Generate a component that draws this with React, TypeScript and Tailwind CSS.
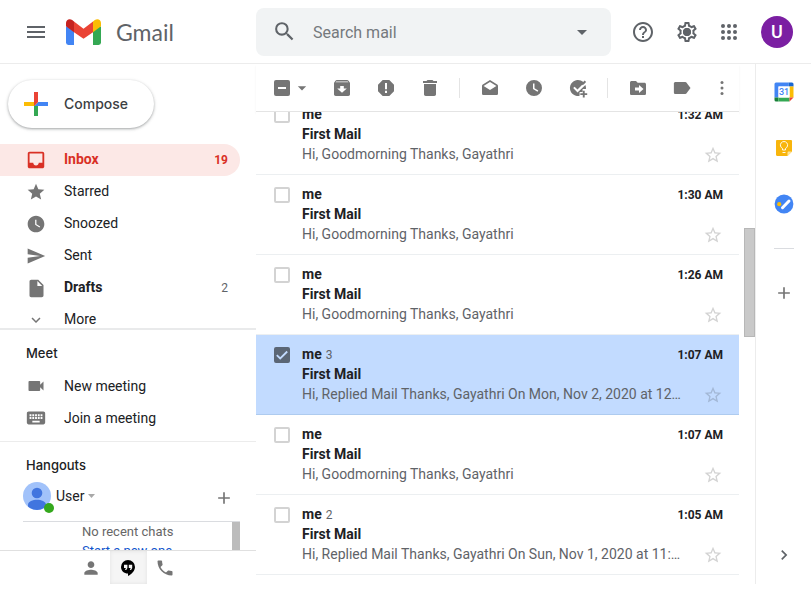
import type { ReactNode } from "react";
import {
  MdAdd,
  MdChevronRight,
  MdExpandMore,
  MdHelpOutline,
  MdInbox,
  MdInsertDriveFile,
  MdKeyboard,
  MdMenu,
  MdPerson,
  MdPhone,
  MdSearch,
  MdSend,
  MdOutlineSettings,
  MdStar,
  MdStarBorder,
  MdVideocam,
  MdWatchLater,
  MdArrowDropDown,
} from "react-icons/md";

type Mail = { time: string; count?: number; snippet: string; checked?: boolean };

const mails: Mail[] = [
  { time: "1:32 AM", snippet: "Hi, Goodmorning Thanks, Gayathri" },
  { time: "1:30 AM", snippet: "Hi, Goodmorning Thanks, Gayathri" },
  { time: "1:26 AM", snippet: "Hi, Goodmorning Thanks, Gayathri" },
  {
    time: "1:07 AM",
    count: 3,
    snippet: "Hi, Replied Mail Thanks, Gayathri On Mon, Nov 2, 2020 at 12…",
    checked: true,
  },
  { time: "1:07 AM", snippet: "Hi, Goodmorning Thanks, Gayathri" },
  {
    time: "1:05 AM",
    count: 2,
    snippet: "Hi, Replied Mail Thanks, Gayathri On Sun, Nov 1, 2020 at 11:…",
  },
];

const folders = [
  { name: "Inbox", icon: <MdInbox size={22} />, count: 19, active: true },
  { name: "Starred", icon: <MdStar size={20} /> },
  { name: "Snoozed", icon: <MdWatchLater size={20} /> },
  { name: "Sent", icon: <MdSend size={20} /> },
  { name: "Drafts", icon: <MdInsertDriveFile size={21} />, count: 2, bold: true },
  { name: "More", icon: <MdExpandMore size={18} /> },
];

function GmailLogo() {
  return (
    <svg viewBox="0 0 35 26" className="h-[26px] w-[35px]" aria-hidden="true">
      <path fill="#4285f4" d="M0 7.5h8V26H2.4A2.4 2.4 0 0 1 0 23.6z" />
      <path fill="#34a853" d="M27 7.5h8v16.1a2.4 2.4 0 0 1-2.4 2.4H27z" />
      <path fill="#ea4335" d="M8 13.2V2.6l9.5 7.1L27 2.6v10.6l-9.5 6.6z" />
      <path fill="#fbbc04" d="M27 2.6l1.8-1.5C31.4-.9 35 .6 35 4v3.200l-8 6z" />
      <path fill="#c5221f" d="M0 4C0 .6 3.600-.9 6.200 1.100L8 2.600v10.600l-8-6z" />
    </svg>
  );
}

function Glyph({ children }: { children: ReactNode }) {
  return (
    <svg viewBox="0 0 20 20" className="size-5" fill="currentColor" fillRule="evenodd" aria-hidden="true">
      {children}
    </svg>
  );
}

const tools = {
  archive: (
    <path d="M3.700 2.600 2.400 4.200C2.100 4.500 2 4.900 2 5.300v11C2 17.200 2.800 18 3.700 18h12.600c.9 0 1.700-.8 1.700-1.700v-11c0-.4-.1-.8-.4-1.100l-1.300-1.600C16 2.200 15.600 2 15.200 2H4.800c-.4 0-.8.2-1.100.6zM4.200 3.400h11.600l.7.900h-13zM10 14.800 5.200 10.400h3V8h3.600v2.400h3z" />
  ),
  spam: (
    <path d="M6.700 2h6.600L18 6.700v6.600L13.300 18H6.700L2 13.300V6.700zM9 5v6.200h2V5zm0 7.800v2.200h2v-2.200z" />
  ),
  remove: <path d="M7.500 2h5l1 1H17v2H3V3h3.500zM4 6h12v10.300c0 .9-.8 1.700-1.700 1.700H5.700c-.9 0-1.700-.8-1.700-1.700z" />,
  read: (
    <path d="M18 8c0-.6-.3-1.100-.8-1.400L10 2 2.800 6.600C2.300 6.900 2 7.400 2 8v7.400C2 16.300 2.700 17 3.600 17h12.800c.9 0 1.600-.7 1.600-1.600zM10 12 3.600 7.900 10 3.900l6.400 4z" />
  ),
  snooze: <path d="M10 2a8 8 0 1 0 0 16 8 8 0 0 0 0-16zM9 5.500h1.500v4.700l3.800 2.200-.8 1.300L9 11.100z" />,
  task: (
    <>
      <path d="M12.800 2.500a8 8 0 1 0-1.200 15.300V14h3V11h3.300a8 8 0 0 0-.5-4.100L9.500 14.400 5.200 10.100l1.400-1.400 2.900 2.900 5.700-5.800 1.500-.1A8 8 0 0 0 12.800 2.500z" />
      <path d="m16.700 2.500 1.400 1.400-3.300 3.300-1.400-1.400zM14.800 12.800h1.900v2.400h2.500v1.900h-2.500v2.500h-1.900v-2.500h-2.500v-1.900h2.500z" />
    </>
  ),
  move: (
    <path d="M3.600 3H8l1.700 1.800h6.700c.9 0 1.600.7 1.600 1.600v9c0 .9-.7 1.600-1.600 1.600H3.600C2.700 17 2 16.300 2 15.400V4.600C2 3.700 2.700 3 3.600 3zM11 7v2.600H7v2.800h4V15l4.500-4z" />
  ),
  label: <path d="M3.500 4h9.800c.5 0 1 .3 1.300.7L18.500 10l-3.900 5.300c-.3.400-.8.700-1.300.7H3.500c-.9 0-1.600-.7-1.600-1.600V5.600C1.900 4.700 2.600 4 3.500 4z" />,
};

function Tool({ label, children }: { label: string; children: ReactNode }) {
  return (
    <button type="button" aria-label={label} className="flex h-10 w-11 items-center justify-center">
      <Glyph>{children}</Glyph>
    </button>
  );
}

function Header() {
  return (
    <header className="flex h-16 items-center border-b border-[#ececec] text-[#5f6368]">
      <div className="flex w-64 shrink-0 items-center pl-6">
        <button type="button" aria-label="Main menu">
          <MdMenu size={24} />
        </button>
        <a href="#inbox" className="ml-[18px] flex items-center gap-[15px]">
          <GmailLogo />
          <span className="font-['Lato',sans-serif] text-[23px] leading-8">Gmail</span>
        </a>
      </div>
      <form className="flex h-12 flex-1 items-center rounded-lg bg-[#f1f3f4] pl-4">
        <button type="button" aria-label="Search">
          <MdSearch size={25} />
        </button>
        <input
          aria-label="Search mail"
          placeholder="Search mail"
          className="ml-4 h-[26px] min-w-0 flex-1 bg-transparent pt-[2px] text-base outline-none placeholder:text-[#75797d]"
        />
        <button type="button" aria-label="Show search options" className="mr-[17px]">
          <MdArrowDropDown size={24} />
        </button>
      </form>
      <div className="flex w-[200px] shrink-0 items-center gap-1 pl-3">
        <button type="button" aria-label="Support" className="flex size-10 items-center justify-center">
          <MdHelpOutline size={24} />
        </button>
        <button type="button" aria-label="Settings" className="grid size-10 place-items-center">
          <MdOutlineSettings size={24} className="[grid-area:1/1]" />
          <span className="size-2 rounded-full bg-[#5f6368] [grid-area:1/1]" />
        </button>
        <button type="button" aria-label="Google apps" className="flex h-10 w-9 items-center justify-center">
          <svg viewBox="0 0 24 24" className="size-6" fill="currentColor" aria-hidden="true">
            {[6, 12, 18].map((y) => [6, 12, 18].map((x) => <circle key={`${x}-${y}`} cx={x} cy={y} r="2" />))}
          </svg>
        </button>
        <button
          type="button"
          aria-label="Account"
          className="ml-[10px] size-8 rounded-full bg-[#7b1fa2] text-[18px] font-medium text-white"
        >
          U
        </button>
      </div>
    </header>
  );
}

function Sidebar() {
  return (
    <aside className="w-64 shrink-0 text-sm text-[#202124]">
      <div className="flex h-20 items-center pl-2">
        <button
          type="button"
          className="flex h-12 w-[146px] items-center gap-3 rounded-full bg-white pl-3 font-['Inter',sans-serif] text-sm font-medium text-[#3c4043] shadow-[0_1px_2px_rgba(60,64,67,0.3),0_1px_3px_1px_rgba(60,64,67,0.15)]"
        >
          <svg viewBox="0 0 32 32" className="size-8" aria-hidden="true">
            <path fill="#34a853" d="M14 16v12h4V18z" />
            <path fill="#4285f4" d="M28 14H18l-4 4h14z" />
            <path fill="#fbbc05" d="M4 14v4h10l4-4z" />
            <path fill="#ea4335" d="M14 4v14l4-4V4z" />
          </svg>
          Compose
        </button>
      </div>
      <nav className="h-[186px] overflow-hidden border-b-2 border-[#e9eaeb]">
        {folders.map((f) => (
          <a
            key={f.name}
            href={`#${f.name.toLowerCase()}`}
            className={`mr-4 flex h-8 items-center rounded-r-full pr-3 pl-6 ${
              f.active ? "bg-[#fce8e6] font-bold text-[#d93025]" : f.bold ? "font-bold" : ""
            }`}
          >
            <span className={`flex w-6 justify-center ${f.active ? "text-[#d93025]" : "text-[#757575]"}`}>
              {f.icon}
            </span>
            <span className="ml-4 flex-1 pb-[2px]">{f.name}</span>
            <span className={f.active ? "text-xs" : "text-xs font-normal text-[#5f6368]"}>{f.count}</span>
          </a>
        ))}
      </nav>
      <section className="h-28 border-b border-[#ececec] pt-[7px]">
        <h2 className="mb-px h-8 pl-[26px] font-['Inter',sans-serif] text-[13px] leading-8 font-medium">Meet</h2>
        <a href="#new-meeting" className="flex h-8 items-center gap-4 pl-6">
          <span className="flex w-6 justify-center text-[#757575]">
            <MdVideocam size={20} />
          </span>
          New meeting
        </a>
        <a href="#join-meeting" className="flex h-8 items-center gap-4 pl-6">
          <span className="flex w-6 justify-center text-[#757575]">
            <MdKeyboard size={22} />
          </span>
          Join a meeting
        </a>
      </section>
      <section className="pt-[7px]">
        <h2 className="mb-px h-8 pl-[26px] font-['Inter',sans-serif] text-[13px] leading-8 font-medium">Hangouts</h2>
        <div className="mr-4 ml-[23px] border-b border-[#dadce0]">
          <div className="flex h-[39px] items-start">
            <span className="relative">
              <svg viewBox="0 0 28 28" className="size-7" aria-hidden="true">
                <circle cx="14" cy="14" r="14" fill="#a1c2fa" />
                <circle cx="14" cy="11" r="5.300" fill="#4175df" />
                <path fill="#4175df" d="M5 24.600v-2.200c0-3 5-4.700 9-4.700s9 1.700 9 4.700v2.200a14 14 0 0 1-18 0z" />
              </svg>
              <span className="absolute -right-[3px] -bottom-[3px] size-[10px] rounded-full bg-[#34a81d]" />
            </span>
            <button type="button" className="ml-[5px] flex h-7 items-center gap-1">
              User
              <svg viewBox="0 0 7 4" className="h-1 w-[7px]" fill="#a8a8a8" aria-hidden="true">
                <path d="M0 0h7L3.500 4z" />
              </svg>
            </button>
            <button type="button" aria-label="New conversation" className="mr-[6px] ml-auto flex h-8 items-center text-[#757575]">
              <MdAdd size={20} />
            </button>
          </div>
        </div>
        <div className="mr-4 flex h-7 justify-between overflow-hidden pl-[82px] text-[13px] leading-[19px]">
          <div>
            <p className="text-[#666]">No recent chats</p>
            <a href="#new-chat" className="text-[#15c]">
              Start a new one
            </a>
          </div>
          <span className="h-7 w-2 bg-[#bcbcbc]" />
        </div>
      </section>
      <div className="flex h-[34px] justify-center border-t border-[#e0e0e0] text-[#757575]">
        <button type="button" aria-label="Contacts" className="flex w-[37px] items-center justify-center">
          <MdPerson size={20} />
        </button>
        <button
          type="button"
          aria-label="Hangouts"
          className="flex w-[37px] items-center justify-center bg-[#f5f5f5] text-black shadow-[inset_0_0_4px_rgba(0,0,0,0.08)]"
        >
          <svg viewBox="0 0 14 16" className="h-4 w-[14px]" fill="currentColor" fillRule="evenodd" aria-hidden="true">
            <path d="M7 0a7 7 0 0 0-7 6.900C0 10.600 3 13.500 7 13.500V16c4-2 7-5.600 7-9.100A7 7 0 0 0 7 0zM3 4.700h3.400v3.300L5.300 10H4l.9-2H3zM7.800 4.700h3.400v3.300L10.100 10H8.800l.9-2H7.800z" />
          </svg>
        </button>
        <button type="button" aria-label="Phone" className="flex w-[37px] items-center justify-center">
          <MdPhone size={20} />
        </button>
      </div>
    </aside>
  );
}

function Toolbar() {
  return (
    <div className="mr-4 flex h-12 shrink-0 items-center border-b border-[#e4e4e4] pl-[18px] text-[#757575] shadow-[0_2px_2px_rgba(0,0,0,0.06)]">
      <label className="grid size-4 place-items-center">
        <input
          type="checkbox"
          aria-label="Select"
          className="size-4 appearance-none rounded-[2px] bg-[#757575] [grid-area:1/1]"
        />
        <span className="h-[2px] w-2 bg-white [grid-area:1/1]" />
      </label>
      <button type="button" aria-label="Select options" className="mr-[6px] flex w-6 justify-center">
        <MdArrowDropDown size={20} />
      </button>
      <div className="flex items-center">
        <Tool label="Archive">{tools.archive}</Tool>
        <Tool label="Report spam">{tools.spam}</Tool>
        <Tool label="Delete">{tools.remove}</Tool>
        <span className="mr-2 ml-[7px] h-5 w-px bg-[#e4e4e4]" />
        <Tool label="Mark as unread">{tools.read}</Tool>
        <Tool label="Snooze">{tools.snooze}</Tool>
        <Tool label="Add to Tasks">{tools.task}</Tool>
        <span className="mr-2 ml-[7px] h-5 w-px bg-[#e4e4e4]" />
        <Tool label="Move to">{tools.move}</Tool>
        <Tool label="Labels">{tools.label}</Tool>
      </div>
      <button type="button" aria-label="More" className="ml-2 flex h-10 items-center">
        <Glyph>
          <circle cx="10" cy="4.500" r="1.500" />
          <circle cx="10" cy="10" r="1.500" />
          <circle cx="10" cy="15.500" r="1.500" />
        </Glyph>
      </button>
    </div>
  );
}

function MailRow({ mail }: { mail: Mail }) {
  return (
    <li
      className={`flex h-20 items-start gap-3 border-b pt-[9px] pr-4 pl-[18px] text-sm leading-5 ${
        mail.checked ? "border-[#aecbef] bg-[#c2dbff]" : "border-[#eceff1] bg-white"
      }`}
    >
      <span className="flex h-[22px] items-center">
        <label className="grid size-4 place-items-center">
          <input
            type="checkbox"
            aria-label={`Select mail from ${mail.time}`}
            defaultChecked={mail.checked}
            className="size-4 appearance-none rounded-[2px] border-2 border-[#d3d3d3] [grid-area:1/1] checked:border-[#5b6675] checked:bg-[#5b6675]"
          />
          {mail.checked && (
            <svg viewBox="0 0 16 16" className="pointer-events-none size-4 [grid-area:1/1]" aria-hidden="true">
              <path d="M2.800 8.200 6.200 11.500 13.200 4.500" fill="none" stroke="#c2dbff" strokeWidth="1.800" />
            </svg>
          )}
        </label>
      </span>
      <div className="min-w-0 flex-1">
        <div className="flex h-5 items-baseline justify-between">
          <span className="font-bold text-[#202124]">
            me
            {mail.count && <span className="ml-1 text-xs font-normal text-[#5f6368]">{mail.count}</span>}
          </span>
          <time className="text-xs leading-5 font-bold text-[#202124]">{mail.time}</time>
        </div>
        <p className="font-bold text-[#202124]">First Mail</p>
        <div className="flex h-[22px] items-center justify-between">
          <p className="truncate pb-[2px] text-[#5f6368]">{mail.snippet}</p>
          <button
            type="button"
            aria-label="Star"
            className={`shrink-0 ${mail.checked ? "text-[#a3b8d6]" : "text-[#d3d3d3]"}`}
          >
            <MdStarBorder size={20} />
          </button>
        </div>
      </div>
    </li>
  );
}

function SidePanel() {
  return (
    <aside className="flex w-14 shrink-0 flex-col items-center border-l border-[#ececec] pt-[18px]">
      <div className="flex flex-col gap-9">
        <button type="button" aria-label="Calendar">
          <svg viewBox="0 0 20 20" className="size-5" aria-hidden="true">
            <path fill="#4285f4" d="M2 .5h12.500v4H4.500v11H.5V2A1.500 1.500 0 0 1 2 .5z" />
            <path fill="#1967d2" d="M14.500.5H18A1.500 1.500 0 0 1 19.500 2v2.500h-5z" />
            <path fill="#188038" d="M.5 15.500h4v4H2A1.500 1.500 0 0 1 .5 18z" />
            <path fill="#34a853" d="M4.500 15.500h11v4h-11z" />
            <path fill="#fbbc04" d="M15.500 4.500h4v11h-4z" />
            <path fill="#fff" d="M4.500 4.500h11v11h-11z" />
            <path fill="#ea4335" d="M15.500 15.500h4l-4 4z" />
            <text x="10" y="13" textAnchor="middle" fontSize="9" fontWeight="500" fill="#4285f4">
              31
            </text>
          </svg>
        </button>
        <button type="button" aria-label="Keep">
          <svg viewBox="0 0 20 20" className="size-5" aria-hidden="true">
            <path fill="#f8b50c" d="M3.200 2h13.600c.7 0 1.200.5 1.200 1.200V13.500L13.500 18H3.200C2.500 18 2 17.500 2 16.800V3.200C2 2.500 2.500 2 3.200 2z" />
            <path fill="#fde49b" d="M18 13.500 13.500 18v-3.300c0-.7.500-1.200 1.200-1.200z" />
            <path
              fill="none"
              stroke="#fff"
              strokeOpacity="0.9"
              d="M8.500 12v-1.600a3.600 3.600 0 1 1 3 0V12zM8.500 14.500h3"
            />
          </svg>
        </button>
        <button type="button" aria-label="Tasks">
          <svg viewBox="0 0 20 20" className="size-5" aria-hidden="true">
            <circle cx="10" cy="10" r="9.400" fill="#4285f4" />
            <path d="m8.500 13.700 6.500-6.700" stroke="#fff" strokeWidth="3" strokeLinecap="round" />
            <circle cx="5.200" cy="10.200" r="2.100" fill="#fbbc04" />
          </svg>
        </button>
      </div>
      <span className="mt-[34px] h-px w-5 bg-[#dadce0]" />
      <button type="button" aria-label="Get add-ons" className="mt-[34px] text-[#757575]">
        <MdAdd size={20} />
      </button>
      <button type="button" aria-label="Hide side panel" className="mt-auto mb-[19px] text-[#5f6368]">
        <MdChevronRight size={20} />
      </button>
    </aside>
  );
}

export default function App() {
  return (
    <div className="min-h-screen bg-white font-['Roboto',sans-serif]">
      <Header />
      <div className="flex">
        <Sidebar />
        <main className="flex min-w-0 flex-1 flex-col">
          <Toolbar />
          <div className="flex h-[471px] overflow-hidden">
            <ul className="-mt-[17px] min-w-0 flex-1">
              {mails.map((mail, i) => (
                <MailRow key={i} mail={mail} />
              ))}
            </ul>
            <div className="flex w-4 justify-end pt-[116px]">
              <span className="h-[109px] w-[11px] border border-[#b7b7b7] bg-[#c9c9c9]" />
            </div>
          </div>
        </main>
        <SidePanel />
      </div>
    </div>
  );
}
